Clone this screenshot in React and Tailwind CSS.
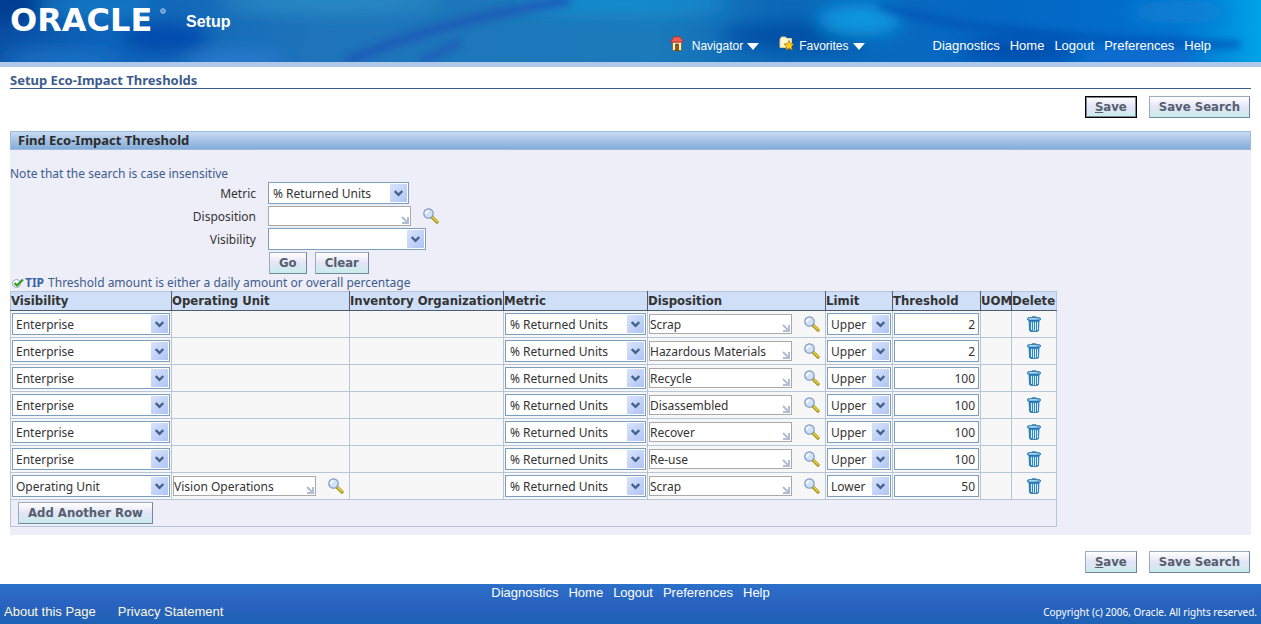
import React from "react";

const navLinks = ["Diagnostics", "Home", "Logout", "Preferences", "Help"];

const columns = [
  { label: "Visibility", width: "w-[161px]" },
  { label: "Operating Unit", width: "w-[178px]" },
  { label: "Inventory Organization", width: "w-[154px]" },
  { label: "Metric", width: "w-[144px]" },
  { label: "Disposition", width: "w-[178px]" },
  { label: "Limit", width: "w-[67px]" },
  { label: "Threshold", width: "w-[88px]" },
  { label: "UOM", width: "w-[31px]" },
  { label: "Delete", width: "w-[45px]" },
];

const rows = [
  { visibility: "Enterprise", disposition: "Scrap", limit: "Upper", threshold: "2" },
  { visibility: "Enterprise", disposition: "Hazardous Materials", limit: "Upper", threshold: "2" },
  { visibility: "Enterprise", disposition: "Recycle", limit: "Upper", threshold: "100" },
  { visibility: "Enterprise", disposition: "Disassembled", limit: "Upper", threshold: "100" },
  { visibility: "Enterprise", disposition: "Recover", limit: "Upper", threshold: "100" },
  { visibility: "Enterprise", disposition: "Re-use", limit: "Upper", threshold: "100" },
  { visibility: "Operating Unit", unit: "Vision Operations", disposition: "Scrap", limit: "Lower", threshold: "50" },
];

const visibilityOptions = ["Enterprise", "Operating Unit"];
const metricOptions = ["% Returned Units"];
const limitOptions = ["Upper", "Lower"];

/* Icons */

const SearchIcon = () => (
  <svg width="16" height="16" viewBox="0 0 16 16">
    <path d="M9 9l5 5" stroke="#a08c1c" strokeWidth="3.2" strokeLinecap="round" />
    <path d="M9.5 9l4.5 4.5" stroke="#e0c83a" strokeWidth="1.8" strokeLinecap="round" />
    <circle cx="5.5" cy="5.5" r="4.7" fill="#cfe2f8" stroke="#7f98bc" strokeWidth="1.2" />
    <path d="M2.800 6a3 3 0 0 1 3-3" stroke="#fff" strokeWidth="1.6" fill="none" />
  </svg>
);

const TrashIcon = () => (
  <svg width="14" height="16" viewBox="0 0 14 16">
    <path d="M2 4h10l-.5 10.500c0 .7-1.800 1.200-4.500 1.200s-4.500-.5-4.500-1.200z" fill="#2f86c4" stroke="#1f6ca8" strokeWidth=".8" />
    <path d="M4.500 6v8M6.500 6v9M8.500 6v9M10.500 6v8" stroke="#d4edfb" strokeWidth="1" />
    <path d="M5 2V.8h4V2" fill="none" stroke="#2a78b0" />
    <rect x=".5" y="1.700" width="13" height="2.600" rx="1.300" fill="#7cbce6" stroke="#1f6ca8" strokeWidth=".9" />
    <path d="M2.500 2.800h7" stroke="#d8effc" strokeWidth=".8" />
  </svg>
);

const HomeIcon = () => (
  <svg className="mb-[5px]" width="14" height="15" viewBox="0 0 14 15">
    <path d="M2.500 6h9v8.500h-9z" fill="#fbf3c4" stroke="#8a6a28" />
    <path d="M5.500 8h3v6.500h-3z" fill="#8a5c20" stroke="#4c3008" strokeWidth=".6" />
    <path d="M4 .8h6L13.500 6H.5z" fill="#ec5e54" stroke="#b83028" strokeWidth=".9" />
  </svg>
);

const FavoritesIcon = () => (
  <svg className="mb-[5px]" width="16" height="15" viewBox="0 0 16 15">
    <path d="M1 3.500L2.500 1h4L8 2.500h4.500v9H1z" fill="#fdf6d0" stroke="#e0cf8c" />
    <path
      d="M10 4.500l1.500 3.200 3.500.4-2.600 2.400.7 3.500-3.100-1.700L6.900 14l.7-3.500L5 8.100l3.500-.4z"
      fill="#ffd21e"
      stroke="#a87508"
      strokeWidth=".8"
    />
  </svg>
);

const TipIcon = () => (
  <svg className="ml-[2px]" width="13" height="11" viewBox="0 0 13 11">
    <circle cx="4.500" cy="5.500" r="4" fill="#fff" stroke="#8fa6c4" />
    <path d="M2.500 5L5 7.500l6-6" fill="none" stroke="#2c9a1c" strokeWidth="2.200" />
  </svg>
);

const Triangle = () => (
  <svg width="12" height="7" viewBox="0 0 12 7">
    <path d="M0 0h12L6 7z" fill="#fff" />
  </svg>
);

const Brand = () => (
  <div className="flex w-[156px] items-start justify-between text-white">
    <span className="font-['DejaVu_Sans',sans-serif] text-[32px] leading-10 font-bold">ORACLE</span>
    <svg className="mt-2" width="6" height="6" viewBox="0 0 6 6">
      <circle cx="3" cy="3" r="2.200" fill="none" stroke="#cfe0f4" />
      <circle cx="3" cy="3" r=".8" fill="#cfe0f4" />
    </svg>
  </div>
);

// Soft blue streaks behind the top bar
const HeaderArt = () => (
  <svg className="absolute inset-0 h-full w-full" viewBox="0 0 1261 62" preserveAspectRatio="none" aria-hidden="true">
    <defs>
      <linearGradient id="sky">
        <stop offset="0" stopColor="#0a50a4" />
        <stop offset=".08" stopColor="#0c62b8" />
        <stop offset=".25" stopColor="#1f74ba" />
        <stop offset=".52" stopColor="#1b7aba" />
        <stop offset=".62" stopColor="#0c68b8" />
        <stop offset=".8" stopColor="#0368c4" />
        <stop offset=".93" stopColor="#0270cc" />
        <stop offset="1" stopColor="#00a4e8" />
      </linearGradient>
      <filter id="soft" x="-40%" y="-100%" width="180%" height="300%">
        <feGaussianBlur stdDeviation="9" />
      </filter>
      <filter id="thin" x="-20%" y="-60%" width="140%" height="220%">
        <feGaussianBlur stdDeviation="4" />
      </filter>
    </defs>
    <rect width="1261" height="62" fill="url(#sky)" />
    <g filter="url(#soft)">
      <ellipse cx="10" cy="5" rx="40" ry="18" fill="#063c92" />
      <ellipse cx="165" cy="38" rx="45" ry="14" fill="#0648ac" />
      <ellipse cx="95" cy="6" rx="60" ry="8" fill="#1580c8" />
      <ellipse cx="60" cy="60" rx="60" ry="9" fill="#1a74c8" />
      <ellipse cx="235" cy="62" rx="50" ry="10" fill="#2a7cd0" />
      <ellipse cx="330" cy="2" rx="110" ry="10" fill="#2a8cc4" />
      <ellipse cx="620" cy="4" rx="110" ry="10" fill="#1890d0" />
      <ellipse cx="800" cy="36" rx="80" ry="14" fill="#0650a4" />
      <ellipse cx="860" cy="20" rx="42" ry="16" fill="#0e98e0" />
      <ellipse cx="1020" cy="50" rx="60" ry="12" fill="#044cac" />
      <ellipse cx="1140" cy="58" rx="60" ry="14" fill="#0a6cd0" />
      <ellipse cx="1180" cy="12" rx="50" ry="12" fill="#0880d4" />
    </g>
    <g filter="url(#thin)" fill="none">
      <path d="M345 62Q440 20 570 0" stroke="#1e5cb8" strokeWidth="10" />
      <path d="M420 62l40-20" stroke="#1e5cb8" strokeWidth="8" />
      <path d="M880 6Q960 30 1090 38T1240 44" stroke="#0450b0" strokeWidth="6" />
    </g>
  </svg>
);

/* Controls */

const Button = ({ children, focused }) => (
  <button
    type="button"
    className={`h-[22px] border bg-linear-to-b from-white via-[#e4e4f6] to-[#c8ecec] px-[9px] font-['DejaVu_Sans_Condensed','DejaVu_Sans',sans-serif] text-[13px] leading-4 font-bold whitespace-nowrap text-[#54606e] ${
      focused ? "border-black outline outline-1 -outline-offset-2 outline-[#7a8794]" : "border-[#9aabba] border-r-[#74879a] border-b-[#74879a]"
    }`}
  >
    {children}
  </button>
);

const Select = ({ id, label, value, options, className = "w-full", pad = "pl-[3px]" }) => (
  <div className={`relative ${className}`}>
    <select
      id={id}
      aria-label={label}
      defaultValue={value}
      className={`block h-[22px] w-full appearance-none border border-[#7b9ebd] bg-white pt-px text-[12px] leading-4 text-[#333] ${pad}`}
    >
      {options.map((option) => (
        <option key={option}>{option}</option>
      ))}
    </select>
    <span className="pointer-events-none absolute top-[2px] right-[2px] flex h-[18px] w-[17px] items-center justify-center bg-linear-to-br from-[#d8e4fc] to-[#b0c4f4]">
      <svg width="9" height="7" viewBox="0 0 9 7">
        <path d="M.7 1l3.800 3.800L8.300 1" fill="none" stroke="#45628a" strokeWidth="2.400" />
      </svg>
    </span>
  </div>
);

const LovInput = ({ id, label, value }) => (
  <div className="flex items-center gap-3">
    <div className="relative w-[143px]">
      <input
        id={id}
        aria-label={label}
        defaultValue={value}
        className="block h-5 w-full border border-[#a9a9a9] bg-white text-[12px] leading-4 text-[#333]"
      />
      <svg className="pointer-events-none absolute right-[2px] bottom-[2px]" width="8" height="8" viewBox="0 0 8 8">
        <path d="M1 1l5 5M7 1v6H1" fill="none" stroke="#b0bdd4" strokeWidth="2" />
      </svg>
    </div>
    <button type="button" aria-label="Search" className="h-4 w-4">
      <SearchIcon />
    </button>
  </div>
);

const SaveButtons = ({ focused }) => (
  <div className="flex justify-end gap-3 pr-px">
    <Button focused={focused}>
      <span className="underline">S</span>ave
    </Button>
    <Button>Save Search</Button>
  </div>
);

const Header = () => (
  <header className="relative border-b-[5px] border-[#b0c8e8]">
    <HeaderArt />
    <div className="relative flex h-[62px] items-start justify-between pr-[50px] pl-[10px] text-white">
      <div className="flex items-center gap-5">
        <Brand />
        <span className="pt-1 font-['Liberation_Sans',Arial,sans-serif] text-[16px] leading-6 font-bold">Setup</span>
      </div>
      <nav className="flex items-center pt-9 font-['Liberation_Sans',Arial,sans-serif] text-[13px] leading-5">
        <a href="#navigator" className="mr-5 flex items-center gap-1 text-[12px]">
          <HomeIcon />
          <span className="ml-1">Navigator</span>
          <Triangle />
        </a>
        <a href="#favorites" className="mr-[68px] flex items-center gap-1 text-[12px]">
          <FavoritesIcon />
          <span>Favorites</span>
          <Triangle />
        </a>
        <div className="flex gap-[10px]">
          {navLinks.map((link) => (
            <a key={link} href={`#${link}`}>{link}</a>
          ))}
        </div>
      </nav>
    </div>
  </header>
);

const SearchForm = () => (
  <div className="grid grid-cols-[246px_1fr] items-center gap-x-3 text-[12px] leading-4 text-[#333]">
    <label htmlFor="metric" className="pt-px text-right">Metric</label>
    <Select id="metric" value="% Returned Units" options={metricOptions} className="w-[141px]" pad="pl-1" />
    <label htmlFor="disposition" className="pt-px text-right">Disposition</label>
    <div className="py-[2px]">
      <LovInput id="disposition" />
    </div>
    <label htmlFor="visibility" className="pt-px text-right">Visibility</label>
    <Select id="visibility" value="" options={["", ...visibilityOptions]} className="w-[158px]" />
    <div className="col-start-2 flex gap-2 pt-[2px] pl-px">
      <Button>Go</Button>
      <Button>Clear</Button>
    </div>
  </div>
);

const ThresholdTable = () => (
  <table className="w-[1047px] table-fixed border-collapse border border-[#b8c4d8] text-[12px] leading-4 text-[#333]">
    <thead className="font-['DejaVu_Sans_Condensed','DejaVu_Sans',sans-serif] text-[13px]">
      <tr className="h-[19px] bg-[#cfdff7]">
        {columns.map((col) => (
          <th
            key={col.label}
            scope="col"
            className={`border border-t-[#b8c4d8] border-r-[#4c5c6c] border-b-[#4c5c6c] border-l-[#b8c4d8] p-0 text-left font-bold whitespace-nowrap last:border-r-[#b8c4d8] ${col.width}`}
          >
            {col.label}
          </th>
        ))}
      </tr>
    </thead>
    <tbody>
      {rows.map((row, index) => (
        <tr key={index} className="h-[27px] bg-[#f7f7f7] [&>td]:border [&>td]:border-[#b8c4d8] [&>td]:px-px [&>td]:py-0">
          <td>
            <Select label="Visibility" value={row.visibility} options={visibilityOptions} />
          </td>
          <td>{row.unit && <LovInput label="Operating Unit" value={row.unit} />}</td>
          <td></td>
          <td>
            <Select label="Metric" value="% Returned Units" options={metricOptions} pad="pl-1" />
          </td>
          <td>
            <LovInput label="Disposition" value={row.disposition} />
          </td>
          <td>
            <Select label="Limit" value={row.limit} options={limitOptions} />
          </td>
          <td>
            <input
              aria-label="Threshold"
              defaultValue={row.threshold}
              className="block h-[22px] w-full border border-[#7b9ebd] bg-white pr-[3px] text-right text-[12px] leading-4"
            />
          </td>
          <td></td>
          <td>
            <button type="button" aria-label="Delete" className="mx-auto block h-4">
              <TrashIcon />
            </button>
          </td>
        </tr>
      ))}
      <tr className="h-[27px]">
        <td colSpan={9} className="px-[7px] py-0">
          <Button>Add Another Row</Button>
        </td>
      </tr>
    </tbody>
  </table>
);

const Footer = () => (
  <footer className="bg-linear-to-b from-[#2c70c8] via-[#2a62c0] to-[#1c62b4] px-1 font-['Liberation_Sans',Arial,sans-serif] text-[13px] leading-[18px] text-white">
    <nav className="flex justify-center gap-[10px]">
      {navLinks.map((link) => (
        <a key={link} href={`#${link}`}>{link}</a>
      ))}
    </nav>
    <div className="flex items-center justify-between pt-px pb-[3px]">
      <div className="flex gap-[22px] text-[#fdf8dc]">
        <a href="#about">About this Page</a>
        <a href="#privacy">Privacy Statement</a>
      </div>
      <span className="font-['Noto_Sans',sans-serif] text-[10px]">Copyright (c) 2006, Oracle. All rights reserved.</span>
    </div>
  </footer>
);

const App = () => (
  <div className="bg-white font-['Noto_Sans','DejaVu_Sans',sans-serif]">
    <Header />
    <main className="px-[10px]">
      <h1 className="mb-[7px] border-b border-[#3c5c8c] pt-[5px] text-[13px] leading-4 font-bold text-[#3c5c8c]">
        Setup Eco-Impact Thresholds
      </h1>
      <SaveButtons focused />
      <section className="mt-[13px] bg-[#eeeef8] pb-2">
        <h2 className="border border-[#9cbcdc] bg-linear-to-b from-[#c8daf2] to-[#84acd8] px-[7px] text-[13px] leading-[17px] font-bold text-[#2c2c2c]">
          Find Eco-Impact Threshold
        </h2>
        <p className="pt-4 text-[12px] leading-4 text-[#3c5c8c]">Note that the search is case insensitive</p>
        <SearchForm />
        <p className="flex items-center pt-px text-[12px] leading-4 text-[#3c5c8c]">
          <TipIcon />
          <b className="mr-1 text-[#3564ac]">TIP</b>
          Threshold amount is either a daily amount or overall percentage
        </p>
        <ThresholdTable />
      </section>
      <div className="pt-4 pb-[11px]">
        <SaveButtons />
      </div>
    </main>
    <Footer />
  </div>
);

export default App;
